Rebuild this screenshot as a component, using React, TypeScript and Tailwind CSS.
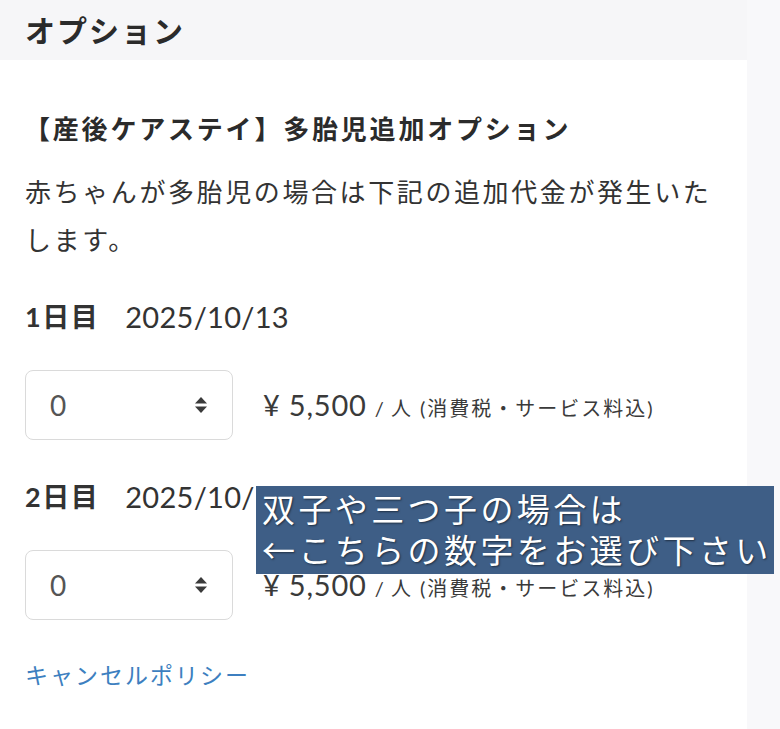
import React from 'react';

const font = { fontFamily: '"Lato", "Noto Sans CJK JP", sans-serif' };

function SortIcon() {
  return (
    <svg width="14" height="18" viewBox="0 0 14 18" className="shrink-0">
      <path d="M7 1 L13 7.5 L1 7.5 Z" fill="#3a3a3a" />
      <path d="M7 17 L13 10.5 L1 10.5 Z" fill="#3a3a3a" />
    </svg>
  );
}

function DayRow({ day, date }: { day: string; date: string }) {
  return (
    <div>
      <div className="flex items-center h-[40px] text-[#333]">
        <span className="text-[27px] font-bold tracking-[1.5px]">{day}</span>
        <span className="text-[29px] ml-[26px] tracking-[0.3px]">{date}</span>
      </div>
      <div className="flex items-center mt-[33px]">
        <div className="w-[208px] h-[70px] border-[1.5px] border-[#dadada] rounded-[8px] flex items-center justify-between pl-[24px] pr-[24px] bg-white">
          <span className="text-[28px] text-[#555]">0</span>
          <SortIcon />
        </div>
        <div className="ml-[30px] flex items-baseline text-[#3a3a3a]">
          <span className="text-[29px] tracking-[0.8px]">¥ 5,500</span>
          <span className="text-[20px] ml-[8px] tracking-[1px]">/ 人</span>
          <span className="text-[20px] ml-[8px] tracking-[2px]">(消費税・サービス料込)</span>
        </div>
      </div>
    </div>
  );
}

export default function App() {
  return (
    <div className="relative w-[780px] h-[729px] flex bg-[#f7f7f9] overflow-hidden" style={font}>
      <div className="w-[747px] flex flex-col">
        {/* Header */}
        <div className="h-[60px] flex items-center px-[25px] bg-[#f6f6f8]">
          <h1 className="text-[30px] font-bold text-[#2b2b2b] tracking-[2px]">オプション</h1>
        </div>

        {/* Card */}
        <div className="flex-1 bg-white px-[25px] pt-[50px]">
          <h2 className="text-[26px] leading-[39px] font-bold text-[#2b2b2b] tracking-[2.8px] -ml-[1px]">
            【産後ケアステイ】多胎児追加オプション
          </h2>
          <p className="mt-[19px] text-[26px] leading-[48px] text-[#333] tracking-[2.6px]">
            赤ちゃんが多胎児の場合は下記の追加代金が発生いたします。
          </p>

          <div className="mt-[33px]">
            <DayRow day="1日目" date="2025/10/13" />
          </div>
          <div className="mt-[37px]">
            <DayRow day="2日目" date="2025/10/14" />
          </div>

          <a className="block mt-[39px] text-[23px] leading-[32px] text-[#3d7fc0] tracking-[2px]">
            キャンセルポリシー
          </a>
        </div>
      </div>
      <div className="flex-1 bg-[#f8f8fa]" />

      {/* Annotation overlay */}
      <div
        className="absolute left-[256px] top-[486px] w-[518px] h-[88px] bg-[#3e5e86] px-[6px] pt-[2px] text-white text-[33px] leading-[41px] tracking-[3.4px] whitespace-nowrap [text-shadow:1px_1px_2px_rgba(0,0,0,0.5)]"
        style={{ fontFamily: '"Noto Sans CJK JP", sans-serif' }}
      >
        <div>双子や三つ子の場合は</div>
        <div>←こちらの数字をお選び下さい</div>
      </div>
    </div>
  );
}
